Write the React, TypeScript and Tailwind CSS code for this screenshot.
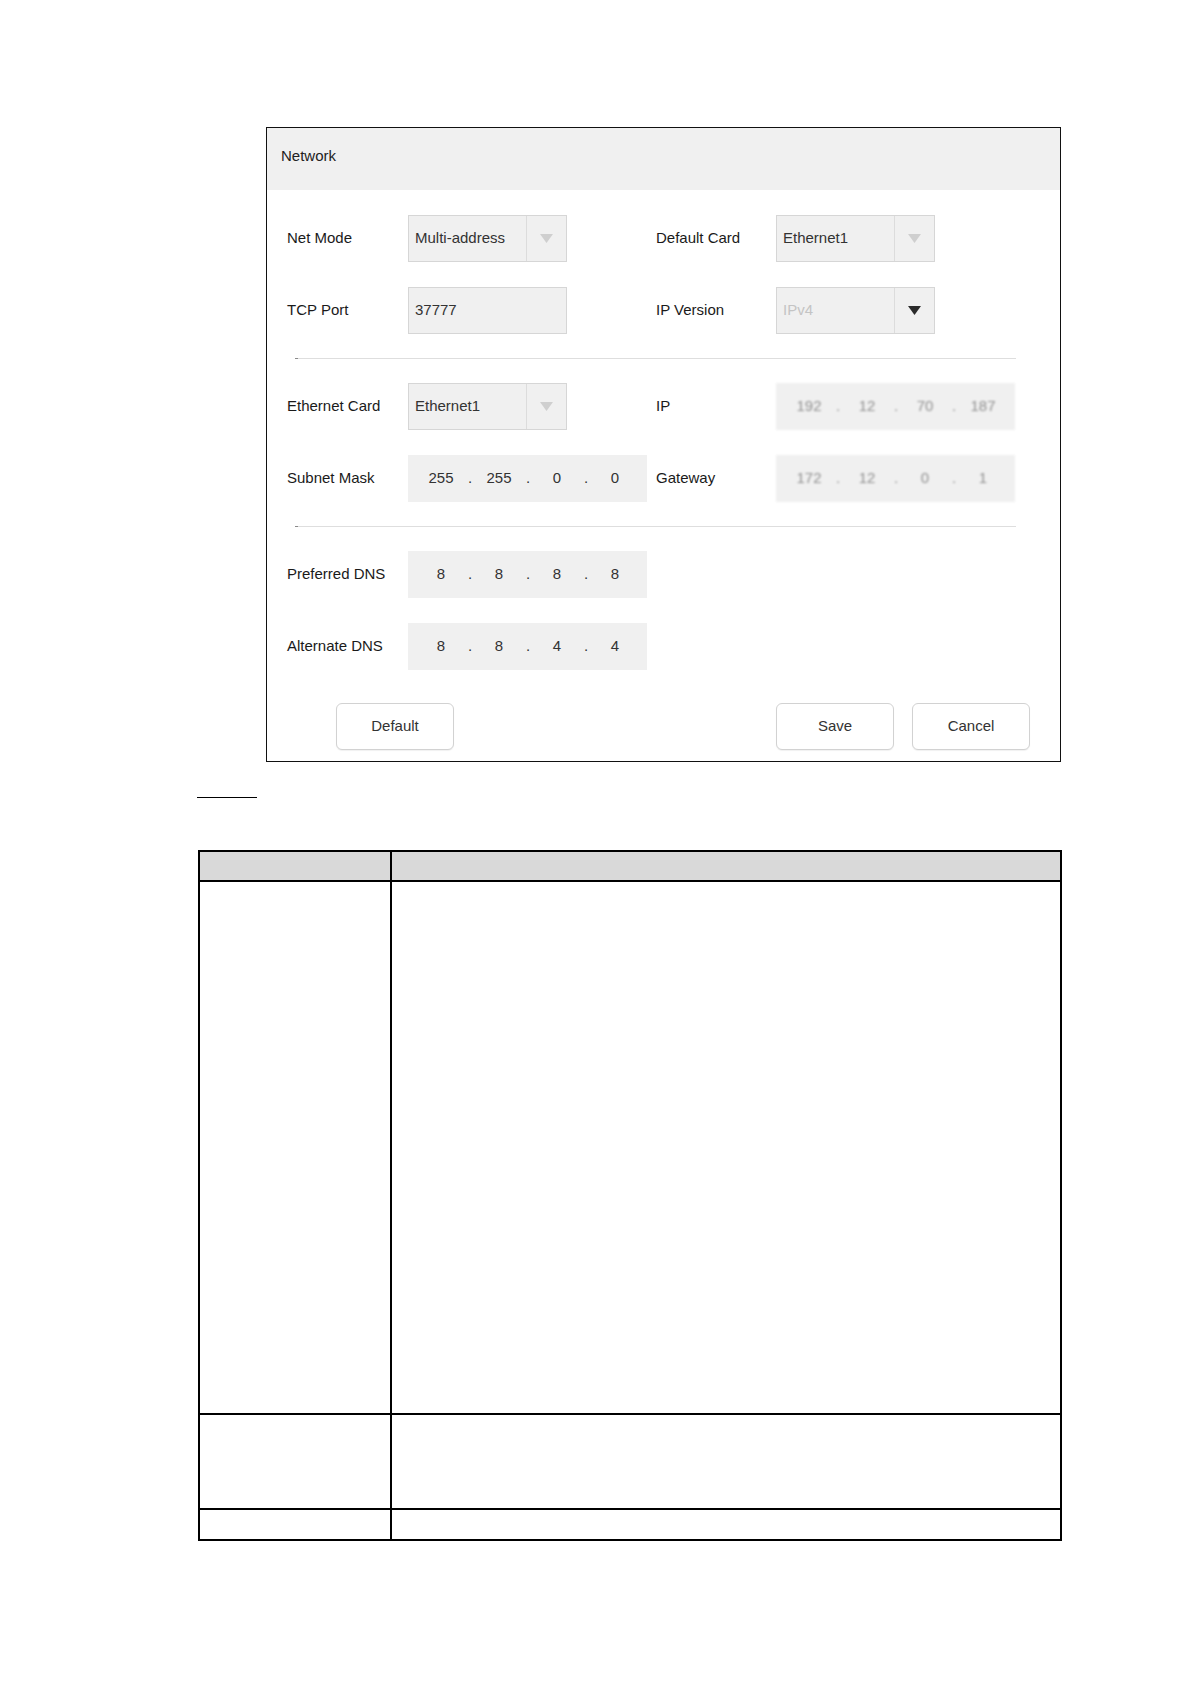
const font = { fontFamily: '"Liberation Sans", Arial, sans-serif' };

function Arrow({ dark }: { dark?: boolean }) {
  return (
    <svg width="13" height="9" viewBox="0 0 13 9">
      <path d="M0 0 H13 L6.5 9 Z" fill={dark ? "#2b2b2b" : "#cfcfcf"} />
    </svg>
  );
}

function Select({ value, muted, dark }: { value: string; muted?: boolean; dark?: boolean }) {
  return (
    <div className="flex h-[47px] w-[159px] border border-[#d6d6d6] bg-[#f0f0f0]">
      <div className={`flex flex-1 items-center pl-[6px] text-[15px] ${muted ? "text-[#c4c4c4]" : "text-[#333]"}`}>
        {value}
      </div>
      <div className="flex w-[40px] items-center justify-center border-l border-[#dcdcdc]">
        <Arrow dark={dark} />
      </div>
    </div>
  );
}

function TextInput({ value }: { value: string }) {
  return (
    <div className="flex h-[47px] w-[159px] items-center border border-[#d6d6d6] bg-[#f0f0f0] pl-[6px] text-[15px] text-[#333]">
      {value}
    </div>
  );
}

function IpBox({ parts, blurred }: { parts: string[]; blurred?: boolean }) {
  return (
    <div
      className={`flex h-[47px] w-[239px] items-center bg-[#f0f0f0] pl-[12px] text-[15px] ${
        blurred ? "text-[#8f8f8f] blur-[1.2px]" : "text-[#333]"
      }`}
    >
      {parts.map((p, i) => (
        <div key={i} className="flex items-center">
          {i > 0 && <span className="w-[16px] text-center">.</span>}
          <span className="w-[42px] text-center">{p}</span>
        </div>
      ))}
    </div>
  );
}

function Row({ label, children, label2, children2 }: { label: string; children: React.ReactNode; label2?: string; children2?: React.ReactNode }) {
  return (
    <div className="flex h-[47px] items-center">
      <div className="w-[121px] text-[15px] text-[#1a1a1a]">{label}</div>
      <div className="w-[248px]">{children}</div>
      {label2 && <div className="w-[120px] text-[15px] text-[#1a1a1a]">{label2}</div>}
      {children2}
    </div>
  );
}

function Divider() {
  return (
    <div className="my-[24px] ml-[8px] mr-[44px] flex h-px bg-[#dedede]">
      <div className="h-px w-[3px] bg-[#8a8a8a]" />
    </div>
  );
}

function Button({ label }: { label: string }) {
  return (
    <div className="flex h-[47px] w-[118px] items-center justify-center rounded-[6px] border border-[#d2d2d2] bg-white text-[15px] text-[#333] shadow-[0_1px_1px_rgba(0,0,0,0.06)]">
      {label}
    </div>
  );
}

export default function App() {
  return (
    <div className="min-h-[1684px] w-[1191px] bg-white" style={font}>
      <div className="pl-[266px] pt-[127px]">
        <div className="w-[795px] border border-[#111]">
          <div className="flex h-[62px] items-center bg-[#f0f0f0] pb-[6px] pl-[14px] text-[15px] text-[#222]">Network</div>
          <div className="pl-[20px] pt-[25px]">
            <div className="flex flex-col gap-[25px]">
              <Row label="Net Mode" label2="Default Card" children2={<Select value="Ethernet1" />}>
                <Select value="Multi-address" />
              </Row>
              <Row label="TCP Port" label2="IP Version" children2={<Select value="IPv4" muted dark />}>
                <TextInput value="37777" />
              </Row>
            </div>
            <Divider />
            <div className="flex flex-col gap-[25px]">
              <Row label="Ethernet Card" label2="IP" children2={<IpBox parts={["192", "12", "70", "187"]} blurred />}>
                <Select value="Ethernet1" />
              </Row>
              <Row label="Subnet Mask" label2="Gateway" children2={<IpBox parts={["172", "12", "0", "1"]} blurred />}>
                <IpBox parts={["255", "255", "0", "0"]} />
              </Row>
            </div>
            <Divider />
            <div className="flex flex-col gap-[25px]">
              <Row label="Preferred DNS">
                <IpBox parts={["8", "8", "8", "8"]} />
              </Row>
              <Row label="Alternate DNS">
                <IpBox parts={["8", "8", "4", "4"]} />
              </Row>
            </div>
            <div className="flex pb-[11px] pt-[33px]">
              <div className="ml-[49px]">
                <Button label="Default" />
              </div>
              <div className="ml-[322px] flex gap-[18px]">
                <Button label="Save" />
                <Button label="Cancel" />
              </div>
            </div>
          </div>
        </div>
      </div>

      <div className="ml-[197px] mt-[35px] h-px w-[60px] bg-black" />

      <div className="ml-[198px] mt-[52px] w-[864px] border-2 border-black">
        <div className="flex h-[30px] border-b-2 border-black bg-[#d9d9d9]">
          <div className="w-[192px] border-r-2 border-black" />
          <div className="flex-1" />
        </div>
        <div className="flex h-[533px] border-b-2 border-black">
          <div className="w-[192px] border-r-2 border-black" />
          <div className="flex-1" />
        </div>
        <div className="flex h-[95px] border-b-2 border-black">
          <div className="w-[192px] border-r-2 border-black" />
          <div className="flex-1" />
        </div>
        <div className="flex h-[29px]">
          <div className="w-[192px] border-r-2 border-black" />
          <div className="flex-1" />
        </div>
      </div>
    </div>
  );
}
